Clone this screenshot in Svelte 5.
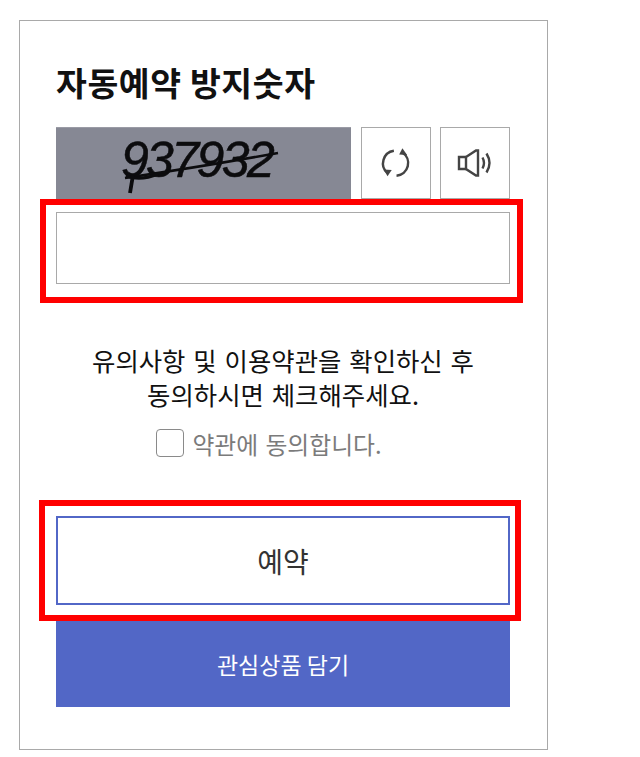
<script>
	let agreed = $state(false);
	let code = $state('');
</script>

<div class="page">
	<div class="card">
		<h2 class="title">자동예약 방지숫자</h2>

		<div class="captcha-row">
			<div class="captcha">
				<span class="digits">937932</span>
				<svg class="noise" viewBox="0 0 295 71" aria-hidden="true">
					<path d="M69 50 Q150 38 222 25" fill="none" stroke="#0c0c0e" stroke-width="2.600" />
					<path d="M70 48 Q85 53 102 46" fill="none" stroke="#0c0c0e" stroke-width="3.200" />
					<path d="M77 47 L74 65" fill="none" stroke="#0c0c0e" stroke-width="3.800" />
				</svg>
			</div>
			<button class="icon-btn refresh" aria-label="새로고침">
				<svg width="34" height="34" viewBox="0 0 32 32" fill="none" stroke="#444" stroke-width="2.300">
					<path d="M14 4.500A12 12 0 0 0 8 25.500" />
					<path d="M4.500 22l7.500 .5-4 6z" fill="#444" stroke="none" />
					<path d="M22 6A12 12 0 0 1 16.500 28" />
					<path d="M26.500 8.500l-7.500-.5 3-6z" fill="#444" stroke="none" />
				</svg>
			</button>
			<button class="icon-btn" aria-label="음성 듣기">
				<svg width="36" height="28" viewBox="0 0 36 28" fill="none" stroke="#444" stroke-width="2.400">
					<path d="M9 8H2v12h7" />
					<path d="M9 8l10-6.500h2v25h-2L9 20z" />
					<path d="M25.500 8.500Q28.500 14 25.500 19.500" />
					<path d="M29.500 4.500Q35.500 14 29.500 23.500" />
				</svg>
			</button>
		</div>

		<div class="marked input-wrap">
			<input class="code-input" type="text" bind:value={code} />
		</div>

		<p class="notice">유의사항 및 이용약관을 확인하신 후<br />동의하시면 체크해주세요.</p>

		<label class="agree">
			<input class="check" type="checkbox" bind:checked={agreed} />
			<span>약관에 동의합니다.</span>
		</label>

		<div class="marked reserve-wrap">
			<button class="reserve">예약</button>
		</div>
		<button class="wish">관심상품 담기</button>
	</div>
</div>

<style>
	:global(body) {
		background: #fff;
	}

	.page {
		width: 640px;
		height: 757px;
		padding: 20px 0 0 19px;
		box-sizing: border-box;
		font-family: 'Noto Sans CJK KR', 'Noto Sans', sans-serif;
		overflow: hidden;
	}

	.card {
		width: 529px;
		height: 730px;
		box-sizing: border-box;
		border: 1px solid #a9a9a9;
		padding: 0 37px 0 36px;
	}

	.title {
		margin: 38px 0 0;
		height: 68px;
		font-size: 33.500px;
		line-height: 46px;
		font-weight: 700;
		color: #111;
		letter-spacing: 0.6px;
	}

	.captcha-row {
		display: flex;
		height: 72px;
	}

	.captcha {
		position: relative;
		width: 295px;
		background: #868894;
		display: flex;
		justify-content: center;
		box-sizing: border-box;
		border-top: 1px solid #9a9ba5;
	}

	.digits {
		font-family: 'Liberation Sans', sans-serif;
		font-style: italic;
		font-size: 50px;
		line-height: 64px;
		color: #0c0c0e;
		letter-spacing: -2.600px;
		margin-right: 14px;
		-webkit-text-stroke: 0.5px #0c0c0e;
	}

	.noise {
		position: absolute;
		left: 0;
		top: 0;
		width: 295px;
		height: 71px;
	}

	.icon-btn {
		width: 70px;
		height: 72px;
		margin-left: 9px;
		padding: 0;
		background: #fff;
		border: 1px solid #a9a9a9;
		display: flex;
		align-items: center;
		justify-content: center;
		box-sizing: border-box;
	}

	.refresh {
		margin-left: 10px;
	}

	.marked {
		position: relative;
	}

	/* red annotation boxes drawn over the form */
	.marked::after {
		content: '';
		position: absolute;
		border: 6px solid #ff0000;
		pointer-events: none;
	}

	.input-wrap {
		margin-top: 13px;
		height: 72px;
	}

	.input-wrap::after {
		inset: -13px -13px -19px -16px;
	}

	.code-input {
		display: block;
		width: 100%;
		height: 100%;
		box-sizing: border-box;
		border: 1px solid #a9a9a9;
		background: #fff;
	}

	.notice {
		margin: 59px 0 0;
		text-align: center;
		font-size: 25.400px;
		line-height: 34px;
		word-spacing: 2.200px;
		color: #111;
	}

	.agree {
		margin-top: 17px;
		height: 30px;
		display: flex;
		align-items: center;
		justify-content: center;
		gap: 8px;
		font-size: 23.800px;
		word-spacing: 2px;
		color: #7b7b7b;
		padding-right: 28px;
	}

	.check {
		appearance: none;
		width: 28px;
		height: 28px;
		margin: 0;
		border: 1.500px solid #8a8a8a;
		border-radius: 4px;
		background: #fff;
	}

	.reserve-wrap {
		margin-top: 58px;
		height: 89px;
	}

	.reserve-wrap::after {
		inset: -16px -11px -16px -17px;
	}

	.reserve {
		display: block;
		width: 100%;
		height: 100%;
		box-sizing: border-box;
		border: 2px solid #5267c7;
		background: #fff;
		font-family: inherit;
		font-size: 28px;
		color: #333;
	}

	.wish {
		display: block;
		width: 100%;
		height: 87px;
		margin-top: 15px;
		padding: 0;
		border: none;
		background: #5267c6;
		color: #fff;
		font-family: inherit;
		font-size: 23px;
	}
</style>
